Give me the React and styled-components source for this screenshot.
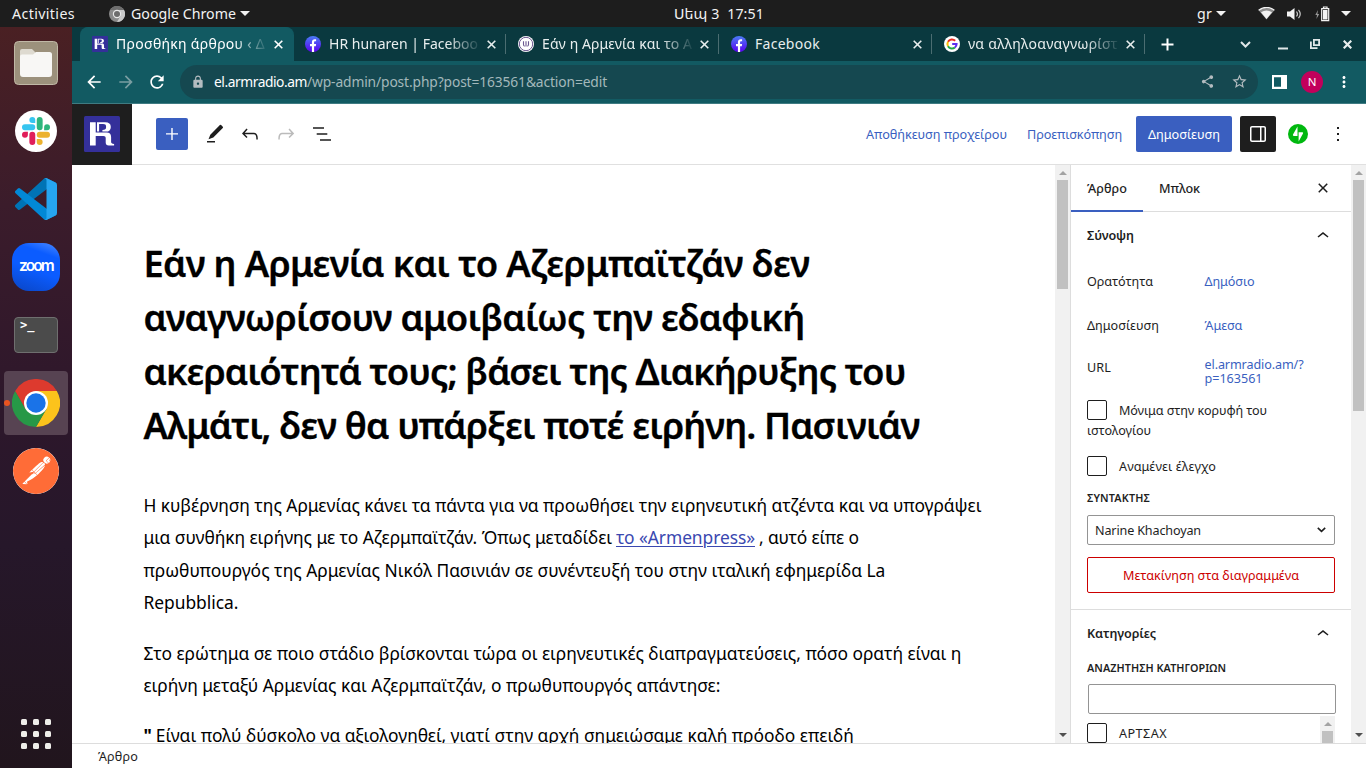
import React, { useLayoutEffect, useRef } from 'react';
import styled, { createGlobalStyle, css } from 'styled-components';
import { SiPostman } from 'react-icons/si';
import { MdArrowBack, MdArrowForward, MdRefresh, MdLock, MdShare, MdStarBorder, MdMoreVert } from 'react-icons/md';

const blue = '#3a5fc0';
const ink = '#1e1e1e';

const GlobalStyle = createGlobalStyle`
  * { box-sizing: border-box; }
  html, body { margin: 0; padding: 0; }
  body {
    width: 1366px;
    height: 768px;
    overflow: hidden;
    font-family: 'Noto Sans', 'Open Sans', 'DejaVu Sans', sans-serif;
    color: ${ink};
  }
  svg { display: block; flex: none; }
`;

/* Text run whose tracking is adjusted to reach a given width. */
const Run = styled.span`
  display: inline-block;
  white-space: pre;
  flex: none;
  justify-self: start;
  align-self: flex-start;
`;

function Fit({ w, children, ...rest }) {
  const ref = useRef(null);
  useLayoutEffect(() => {
    const el = ref.current;
    el.style.letterSpacing = '0px';
    const natural = el.getBoundingClientRect().width;
    el.style.letterSpacing = `${(w - natural) / el.textContent.length}px`;
  }, [w, children]);
  return <Run ref={ref} {...rest}>{children}</Run>;
}

const Desktop = styled.div`
  width: 1366px;
  height: 768px;
  display: flex;
  flex-direction: column;
  background: #fff;
`;

const TopBar = styled.header`
  height: 27px;
  flex: none;
  display: grid;
  grid-template-columns: 674px 1fr auto;
  align-items: center;
  background: #1d1d1d;
  color: #f2f2f2;
  font-size: 14.2px;
  line-height: 27px;
`;

const TopLeft = styled.div`
  display: flex;
  align-items: center;
  padding-left: 12px;
`;

const AppMenu = styled.div`
  display: flex;
  align-items: center;
  margin-left: 34px;
  gap: 6px;
`;

const Caret = styled.i`
  width: 0;
  height: 0;
  border: 5px solid transparent;
  border-top-color: #f2f2f2;
  border-bottom: 0;
  margin-left: ${(p) => p.$ml || 0}px;
`;

const TopRight = styled.div`
  display: flex;
  align-items: center;
  padding-right: 15px;
`;

const Body = styled.div`
  flex: 1;
  min-height: 0;
  display: flex;
`;

const Dock = styled.nav`
  width: 72px;
  flex: none;
  display: flex;
  flex-direction: column;
  align-items: center;
  gap: 4px;
  padding: 4px 0 2px;
  background: linear-gradient(#4a2023, #3b1c2b 24%, #2d172b 52%, #26172a 70%, #21151d);
`;

const DockItem = styled.div`
  position: relative;
  width: 64px;
  height: 64px;
  flex: none;
  display: grid;
  place-items: center;
  border-radius: 4px;
  background: ${(p) => (p.$active ? '#574352' : 'transparent')};
  margin-top: ${(p) => (p.$last ? 'auto' : 0)};
`;

const RunningDot = styled.b`
  position: absolute;
  left: 0;
  top: 29px;
  width: 6px;
  height: 6px;
  border-radius: 50%;
  background: #e95420;
`;

const ZoomTile = styled.div`
  width: 48px;
  height: 48px;
  border-radius: 17px;
  background: linear-gradient(20deg, #0a45c4, #0b5cff 45%, #0b5cff 75%, #4d8bff);
  color: #fff;
  font: 600 15.5px/45px 'Inter', sans-serif;
  padding-left: 7px;
`;

const TerminalTile = styled.div`
  width: 44px;
  height: 36px;
  border-radius: 4px;
  border: 1px solid #6f6f6f;
  background: #4b4b4b;
  color: #fff;
  font: 700 12px/15px 'DejaVu Sans Mono', monospace;
  padding-left: 5px;
`;

const PostmanTile = styled.div`
  width: 46px;
  height: 46px;
  margin-bottom: 1px;
  border-radius: 50%;
  overflow: hidden;
  background: #fff;
  color: #ff6c37;
`;

const DotGrid = styled.div`
  display: grid;
  grid-template-columns: repeat(3, 6px);
  gap: 6px;
`;

const GridDot = styled.i`
  height: 6px;
  border-radius: 1.5px;
  background: #efeeea;
`;

const Browser = styled.main`
  flex: 1;
  min-width: 0;
  display: flex;
  flex-direction: column;
`;

const TabStrip = styled.div`
  height: 34px;
  flex: none;
  display: flex;
  padding-left: 8px;
  background: #0a393f;
  color: #e8eeee;
  font-size: 14px;
`;

const Tab = styled.div`
  width: 213px;
  height: 34px;
  display: flex;
  align-items: center;
  padding-left: 12px;
  position: relative;
  border-radius: 8px 8px 0 0;
  ${(p) => p.$active && css`
    background: #125a62;
    color: #fff;
    box-shadow: 1px 0 #125a62;
  `}
  ${(p) => p.$divided && css`
    &::after {
      content: '';
      position: absolute;
      right: 0;
      top: 7px;
      width: 1px;
      height: 20px;
      background: #4b6d71;
    }
  `}
`;

const TabTitle = styled.div`
  width: 150px;
  height: 34px;
  line-height: 33px;
  margin: 0 8px;
  overflow: hidden;
  white-space: pre;
  ${(p) => p.$fade && css`
    mask-image: linear-gradient(to right, #000 118px, transparent 153px);
  `}
`;

const WindowButtons = styled.div`
  flex: 1;
  display: flex;
  align-items: center;
  padding-left: 16px;
`;

const Spacer = styled.div`
  width: ${(p) => p.$w}px;
  flex: none;
`;

const AddressRow = styled.div`
  height: 43px;
  flex: none;
  display: flex;
  align-items: center;
  padding: 0 12px 1px 12px;
  background: #125a62;
  border-bottom: 1px solid #3f7b82;
  color: #fff;
`;

const AddressBox = styled.div`
  width: 1078px;
  height: 34px;
  margin: 0 14px 0 13px;
  display: flex;
  align-items: center;
  padding: 0 10px 0 11px;
  border-radius: 17px;
  background: #154850;
  font-size: 13.8px;
  line-height: 34px;
`;

const UrlPath = styled.span`
  flex: 1;
  color: #a3b8bb;
`;

const Avatar = styled.div`
  width: 22px;
  height: 22px;
  border-radius: 50%;
  margin: 0 12px 0 14px;
  background: #c2005b;
  color: #fff;
  font-size: 11.5px;
  line-height: 22px;
  text-align: center;
`;

const EditorHeader = styled.div`
  height: 61px;
  flex: none;
  display: flex;
  align-items: center;
  border-bottom: 1px solid #e0e0e0;
  font-size: 12.7px;
`;

const SiteHub = styled.div`
  width: 60px;
  height: 61px;
  align-self: flex-start;
  flex: none;
  display: grid;
  place-items: start center;
  padding-top: 12px;
  background: ${ink};
  margin-right: 24px;
`;

const Inserter = styled.button`
  width: 32px;
  height: 32px;
  border: 0;
  padding: 4px;
  border-radius: 2px;
  background: ${blue};
  color: #fff;
  margin-right: 14px;
`;

const Tools = styled.div`
  display: flex;
  gap: 12px;
  flex: 1;
`;

const TextLink = styled.a`
  color: ${blue};
  margin-right: ${(p) => p.$mr || 0}px;
`;

const Publish = styled.button`
  width: 96px;
  height: 36px;
  border: 0;
  padding: 0;
  border-radius: 2px;
  background: ${blue};
  color: #fff;
  font: inherit;
`;

const Toggle = styled.button`
  width: 36px;
  height: 36px;
  border: 0;
  padding: 6px;
  margin: 0 12px 0 8px;
  border-radius: 2px;
  background: ${ink};
  color: #fff;
`;

const Work = styled.div`
  flex: 1;
  min-height: 0;
  display: flex;
`;

const Canvas = styled.article`
  width: 983px;
  flex: none;
  overflow: hidden;
  padding: 71px 0 0 71.4px;
  color: #000;
`;

const Title = styled.h1`
  margin: 0 0 37px;
  font-size: 36.4px;
  line-height: 54px;
  font-weight: 600;
  -webkit-text-stroke: 0.3px #000;
`;

const Para = styled.p`
  margin: 0 0 18px;
  font-size: 17.4px;
  line-height: 32.4px;
`;

const Line = styled.span`
  display: flex;
  white-space: pre;
`;

const InlineLink = styled.a`
  color: #3a48b0;
  margin: 0 4px;
  ${Run} {
    text-decoration: underline;
    text-decoration-thickness: 1px;
    text-underline-offset: 2px;
  }
`;

const Track = styled.div`
  width: 15px;
  flex: none;
  display: flex;
  flex-direction: column;
  align-items: center;
  background: #f1f1f1;
`;

const Arrow = styled.i`
  width: 0;
  height: 0;
  border: 4px solid transparent;
  ${(p) => (p.$down
    ? css`border-top-color: #505050; border-bottom: 0; margin: auto 0 6px;`
    : css`border-bottom-color: #a3a3a3; border-top: 0; margin: 6px 0 5px;`)}
`;

const Thumb = styled.div`
  width: 11px;
  height: ${(p) => p.$h}px;
  background: #c1c1c1;
`;

const Sidebar = styled.aside`
  width: 281px;
  flex: none;
  overflow: hidden;
  border-left: 1px solid #ddd;
  font-size: 12.6px;
  line-height: 20px;
`;

const SideTabs = styled.div`
  height: 47px;
  display: flex;
  align-items: center;
  border-bottom: 1px solid #ddd;
  font-weight: 500;
  padding-right: 16px;
`;

const SideTab = styled.div`
  width: 72px;
  height: 47px;
  line-height: 47px;
  padding-left: 16px;
  margin-right: ${(p) => (p.$active ? 0 : 'auto')};
  border-bottom: ${(p) => (p.$active ? `2px solid ${blue}` : '0')};
`;

const Section = styled.section`
  padding: 0 16px;
  height: ${(p) => p.$h || 'auto'};
  border-bottom: 1px solid #ddd;
`;

const SectionHead = styled.h2`
  display: flex;
  justify-content: space-between;
  align-items: center;
  margin: 0;
  height: ${(p) => p.$h}px;
  line-height: ${(p) => p.$h}px;
  font-size: 12.6px;
  font-weight: 600;
`;

const Field = styled.div`
  display: flex;
  align-items: center;
  height: ${(p) => p.$h}px;
`;

const FieldName = styled.div`
  width: 117.5px;
  padding-bottom: ${(p) => p.$lift || 0}px;
`;

const FieldValue = styled.div`
  color: ${blue};
  line-height: 14px;
  display: flex;
  flex-direction: column;
`;

const CheckRow = styled.div`
  display: flex;
  align-items: center;
  gap: 12px;
  height: 20px;
  line-height: 21px;
  margin-top: ${(p) => p.$mt || 0}px;
`;

const Box = styled.i`
  width: 20px;
  height: 20px;
  flex: none;
  border: 1px solid ${ink};
  border-radius: 2px;
`;

const Caption = styled.div`
  font-size: 10.8px;
  line-height: 16px;
  font-weight: 600;
  margin-top: ${(p) => p.$mt}px;
`;

const Select = styled.div`
  height: 30px;
  line-height: 29px;
  margin-top: 9px;
  display: flex;
  align-items: center;
  justify-content: space-between;
  padding: 0 8px 0 7px;
  border: 1px solid #949494;
  border-radius: 2px;
`;

const Trash = styled.button`
  display: block;
  width: 248px;
  height: 36px;
  margin-top: 12px;
  padding: 1px 0 0;
  border: 1px solid #c00;
  border-radius: 2px;
  background: #fff;
  color: #c00;
  font: inherit;
`;

const Search = styled.div`
  width: 248px;
  height: 30px;
  margin: 8px 0 0 1px;
  border: 1px solid #949494;
  border-radius: 2px;
`;

const CategoryList = styled.div`
  display: flex;
  justify-content: space-between;
  margin-top: 2px;
  height: 60px;
`;

const Footer = styled.footer`
  height: 25px;
  flex: none;
  border-top: 1px solid #ddd;
  padding-left: 26px;
  font-size: 12.6px;
  line-height: 25px;
`;

const Glyph = ({ d, size = 24, color = 'currentColor' }) => (
  <svg width={size} height={size} viewBox="0 0 24 24" fill={color}><path d={d} /></svg>
);

const icons = {
  plus: 'M11.3 12.6V18h1.4v-5.4H18v-1.3h-5.3V6h-1.4v5.3H6v1.3z',
  edit: 'M17.900 3.100a.9.9 0 0 1 1.200 0l1.700 1.700a.9.9 0 0 1 0 1.200L11.300 15.500 6.500 17.300 8.300 12.700zM5 19h8v1.600H5z',
  undo: 'M18.3 11.7c-.6-.6-1.4-.9-2.3-.9H6.7l2.9-3.3-1.1-1-4.5 5L8.5 16l1-1-2.7-2.7H16c.5 0 .9.2 1.3.5 1 1 1 3.4 1 4.5v.3h1.5v-.2c0-1.5 0-4.3-1.5-5.7z',
  redo: 'M15.6 6.5l-1.1 1 2.9 3.3H8c-.9 0-1.7.3-2.3.9-1.4 1.5-1.4 4.2-1.4 5.6v.2h1.5v-.3c0-1.1 0-3.5 1-4.5.3-.3.7-.5 1.3-.5h9.2L14.5 15l1.1 1.1 4.6-4.6-4.6-5z',
  list: 'M3 5.200h11v1.600H3zM6.700 11.200h10.600v1.600H6.700zM10 17.200h11v1.600H10z',
  drawer: 'M18 4H6c-1.1 0-2 .9-2 2v12c0 1.1.9 2 2 2h12c1.1 0 2-.9 2-2V6c0-1.1-.9-2-2-2zm-4 14.5H6c-.3 0-.5-.2-.5-.5V6c0-.3.2-.5.5-.5h8v13zm4.5-.5c0 .3-.2.5-.5.5h-2.5v-13H18c.3 0 .5.2.5.5v12z',
  close: 'M12 13.06l3.712 3.713 1.061-1.06L13.061 12l3.712-3.712-1.06-1.06L12 10.938 8.288 7.227l-1.061 1.06L10.939 12l-3.712 3.712 1.06 1.061L12 13.061z',
  up: 'M6.5 12.4L12 8l5.5 4.4-.9 1.2L12 10l-4.5 3.6-1-1.2z',
  more: 'M13 19h-2v-2h2v2zm0-6h-2v-2h2v2zm0-6h-2V5h2v2z',
};

const StationLogo = ({ size }) => (
  <svg width={size} height={size} viewBox="0 0 36 36">
    <rect width="36" height="36" rx="1.5" fill="#34309a" />
    <path fill="#fff" d="M6 6.300h5.700V16.600H22.500c3 0 4.600 1.400 4.600 4.500v4.700c0 1.400.8 1.900 3 2.100v1.500h-5.300c-2.100 0-3.100-.8-3.100-2.800v-4.300c0-1.700-.7-2.400-2.300-2.400h-7.700v9.500H6z" />
    <path fill="#fff" d="M13 6.300h8.200c3.700 0 5.600 1.500 5.600 4.600s-1.800 4.700-4.800 4.700h-3.600v-1.700c2.700 0 3.700-.8 3.700-3s-1-2.800-3-2.800h-4v7.500H13z" />
  </svg>
);

const FacebookMark = () => (
  <svg width="16" height="16" viewBox="0 0 16 16">
    <defs><linearGradient id="fb" x1="0" y1="0" x2="0" y2="1"><stop stopColor="#4a7cf6" /><stop offset="1" stopColor="#5a00f0" /></linearGradient></defs>
    <circle cx="8" cy="8" r="8" fill="url(#fb)" />
    <path fill="#fff" d="M6.900 16V10.200H5V7.900h1.900V6.300c0-2 1.100-3.100 2.900-3.100.6 0 1.300.1 1.300.1v2h-.9c-.9 0-1.100.5-1.100 1.100v1.500h2l-.3 2.300H9.100V16z" />
  </svg>
);

const PressMark = () => (
  <svg width="16" height="16" viewBox="0 0 16 16">
    <circle cx="8" cy="8" r="8" fill="#fff" />
    <circle cx="8" cy="8" r="6.700" fill="none" stroke="#6b5790" strokeWidth="1" />
    <path d="M5.500 5.200v3.300q0 1.600 1.200 1.600M8 5.200v5.300M10.500 5.200v3.300q0 1.600-1.200 1.600" stroke="#6b5790" strokeWidth="1.100" fill="none" />
  </svg>
);

const GoogleMark = () => (
  <svg width="16" height="16" viewBox="0 0 16 16" fill="none" strokeWidth="2">
    <circle cx="8" cy="8" r="8" fill="#fff" />
    <path d="M11.200 4.700A4.600 4.600 0 0 0 4 5.800" stroke="#ea2b1f" />
    <path d="M4 5.800a4.600 4.600 0 0 0 0 4.400" stroke="#fbbc05" />
    <path d="M4 10.200a4.600 4.600 0 0 0 6.900 1.300" stroke="#1faa46" />
    <path d="M10.900 11.500A4.600 4.600 0 0 0 12.600 8H8.200" stroke="#5a2ff0" />
  </svg>
);

const Cross = ({ size = 9, width = 1.6 }) => (
  <svg width={size} height={size} viewBox="0 0 9 9" stroke="currentColor" strokeWidth={width}><path d="M.7.7l7.600 7.600M8.300.7L.7 8.300" /></svg>
);

const ChromeMark = () => (
  <svg width="48" height="48" viewBox="0 0 48 48">
    <path d="M24 24 3.200 12A24 24 0 0 1 44.800 12z" fill="#dd3a2e" />
    <path d="M24 12h20.800A24 24 0 0 1 24 48L34.400 30z" fill="#fcc31c" />
    <path d="M34.400 30 24 48A24 24 0 0 1 3.200 12L13.600 30z" fill="#279847" />
    <path d="M3.200 12 13.600 30 24 24V12z" fill="#dd3a2e" />
    <circle cx="24" cy="24" r="12" fill="#fff" />
    <circle cx="24" cy="24" r="9.700" fill="#1a73e8" />
  </svg>
);

const GreyChrome = () => (
  <svg width="16" height="16" viewBox="0 0 16 16">
    <circle cx="8" cy="8" r="8" fill="#8a8a8a" />
    <path d="M8 4h7A8 8 0 0 1 8 16l3.500-6z" fill="#c9c9c9" />
    <path d="M1.100 4A8 8 0 0 1 15 4H8z" fill="#6e6e6e" />
    <circle cx="8" cy="8" r="4.200" fill="#e8e8e8" />
    <circle cx="8" cy="8" r="3" fill="#6c6c6c" />
  </svg>
);

const FilesMark = () => (
  <svg width="44" height="44" viewBox="0 0 44 44">
    <rect x=".5" y=".5" width="43" height="43" rx="4" fill="#9c917c" stroke="#c0b8a6" />
    <path d="M6 10a2 2 0 0 1 2-2h10l4 4h12a3 3 0 0 1 3 3v6H6z" fill="#dedad0" />
    <path d="M6 15.500A2 2 0 0 1 8 13.500h11l3-2.500h13.500a2.500 2.500 0 0 1 2.500 2.500V33a3 3 0 0 1-3 3H9a3 3 0 0 1-3-3z" fill="#f8f7f5" />
  </svg>
);

const slackColors = ['#e01e5a', '#36c5f0', '#2eb67d', '#ecb22e'];
const SlackMark = () => (
  <svg width="42" height="42" viewBox="0 0 42 42">
    <circle cx="21" cy="21" r="21" fill="#fff" />
    <g transform="translate(7 7) scale(1.167)">
      {slackColors.map((c, i) => (
        <path key={c} fill={c} transform={`rotate(${i * 90} 12 12)`} d="M5.042 15.165a2.521 2.521 0 1 1-2.520-2.520h2.520zM6.313 15.165a2.521 2.521 0 0 1 5.042 0v6.313a2.521 2.521 0 0 1-5.042 0z" />
      ))}
    </g>
  </svg>
);

const CodeMark = () => (
  <svg width="42" height="42" viewBox="0 0 100 100">
    <path fill="#0073b5" d="M96.461 10.796 75.857.876A6.230 6.230 0 0 0 68.750 2.083L1.299 63.583a4.170 4.170 0 0 0 .004 6.162l5.510 5.009a4.170 4.170 0 0 0 5.321.236L93.361 13.370c2.725-2.067 6.639-.124 6.639 3.297v-.24a6.250 6.250 0 0 0-3.539-5.631z" />
    <path fill="#0288d6" d="M96.461 89.204 75.857 99.125a6.230 6.230 0 0 1-7.107-1.208L1.299 36.417a4.170 4.170 0 0 1 .004-6.162l5.510-5.009a4.170 4.170 0 0 1 5.321-.236L93.361 86.630c2.725 2.067 6.639.124 6.639-3.297v.24a6.250 6.250 0 0 1-3.539 5.631z" />
    <path fill="#26a5f0" d="M75.858 99.126a6.230 6.230 0 0 1-7.108-1.209c2.306 2.306 6.250.672 6.250-2.589V4.672c0-3.262-3.944-4.895-6.250-2.589A6.230 6.230 0 0 1 75.858.874l20.600 9.907A6.250 6.250 0 0 1 100 16.413v67.174a6.250 6.250 0 0 1-3.541 5.633z" />
  </svg>
);

const tabs = [
  { icon: <StationLogo size={16} />, text: 'Προσθήκη άρθρου ‹ Δ', w: 149, active: true },
  { icon: <FacebookMark />, text: 'HR hunaren | Faceboo', w: 149, divided: true },
  { icon: <PressMark />, text: 'Εάν η Αρμενία και το Α', w: 150, divided: true },
  { icon: <FacebookMark />, text: 'Facebook', w: 65, divided: true, whole: true },
  { icon: <GoogleMark />, text: 'να αλληλοαναγνωρίστ', w: 150, divided: true },
];

const titleLines = [
  ['Εάν η Αρμενία και το Αζερμπαϊτζάν δεν', 666],
  ['αναγνωρίσουν αμοιβαίως την εδαφική', 661],
  ['ακεραιότητά τους; βάσει της Διακήρυξης του', 762],
  ['Αλμάτι, δεν θα υπάρξει ποτέ ειρήνη. Πασινιάν', 776],
];

function Scrollbar({ thumb }) {
  return <Track><Arrow /><Thumb $h={thumb} /><Arrow $down /></Track>;
}

function SystemBar() {
  return (
    <TopBar>
      <TopLeft>
        <Fit w={63}>Activities</Fit>
        <AppMenu><GreyChrome /><Fit w={105}>Google Chrome</Fit><Caret $ml={-2} /></AppMenu>
      </TopLeft>
      <Fit w={90}>Սեպ 3  17:51</Fit>
      <TopRight>
        <Fit w={15}>gr</Fit><Caret $ml={4} />
        <Spacer $w={32} />
        <svg width="17" height="13" viewBox="0 0 17 13"><path d="M.6 3.200Q8.500-2.400 16.400 3.200L8.500 12.600z" fill="#8d8d8d" /><path d="M.6 3.200Q8.500-2.400 16.400 3.200" stroke="#f2f2f2" fill="none" strokeWidth="1.300" /><path d="M3 5.200Q8.500 1.600 14 5.200L8.500 12z" fill="#f2f2f2" /></svg>
        <Spacer $w={12} />
        <svg width="16" height="14" viewBox="0 0 16 14"><path d="M0 4.500h3L7.500 1v12L3 9.500H0z" fill="#f2f2f2" /><path d="M9.500 4.500q2 2.500 0 5M11.500 2.800q3.500 4.200 0 8.400" stroke="#c8c8c8" fill="none" strokeWidth="1.200" /></svg>
        <Spacer $w={12} />
        <svg width="15" height="16" viewBox="0 0 15 16"><path d="M3 4 .3 9H2l-.6 4L4.200 8H2.400z" fill="#999" /><path d="M6.700 2.700h7v12h-7zM8.500 1h3.500v1.500H8.500z" fill="none" stroke="#f2f2f2" strokeWidth="1.200" /><path d="M8 4h4.500v9.500H8z" fill="#f2f2f2" /></svg>
        <Caret $ml={11} />
      </TopRight>
    </TopBar>
  );
}

function Launcher() {
  return (
    <Dock>
      <DockItem><FilesMark /></DockItem>
      <DockItem><SlackMark /></DockItem>
      <DockItem><CodeMark /></DockItem>
      <DockItem><ZoomTile><Fit w={34}>zoom</Fit></ZoomTile></DockItem>
      <DockItem><TerminalTile>&gt;_</TerminalTile></DockItem>
      <DockItem $active><RunningDot /><ChromeMark /></DockItem>
      <DockItem><PostmanTile><SiPostman size={46} /></PostmanTile></DockItem>
      <DockItem $last>
        <DotGrid>{Array.from({ length: 9 }, (_, i) => <GridDot key={i} />)}</DotGrid>
      </DockItem>
    </Dock>
  );
}

function BrowserChrome() {
  return (
    <>
      <TabStrip>
        {tabs.map((t, i) => (
          <Tab key={i} $active={t.active} $divided={t.divided}>
            {t.icon}
            <TabTitle $fade={!t.whole}><Fit w={t.w}>{t.text}</Fit></TabTitle>
            <Cross />
          </Tab>
        ))}
        <WindowButtons>
          <svg width="13" height="13" viewBox="0 0 13 13" stroke="#fff" strokeWidth="2"><path d="M6.500.5v12M.5 6.500h12" /></svg>
          <Spacer $w={66} />
          <svg width="11" height="7" viewBox="0 0 11 7" stroke="#dfe7e8" strokeWidth="2" fill="none"><path d="M1 1l4.500 4.500L10 1" /></svg>
          <Spacer $w={27} />
          <svg width="10" height="11" viewBox="0 0 10 11"><path d="M0 8.500h10v2H0z" fill="#dfe7e8" /></svg>
          <Spacer $w={22} />
          <svg width="10" height="10" viewBox="0 0 10 10" stroke="#dfe7e8" strokeWidth="1.800" fill="none"><path d="M3.900.9h5.200v5.200H3.900zM.9 2.500v6.600h6.600" /></svg>
          <Spacer $w={23} />
          <Cross size={9} width={2.2} />
        </WindowButtons>
      </TabStrip>
      <AddressRow>
        <MdArrowBack size={20} />
        <Spacer $w={12} />
        <MdArrowForward size={20} color="#7a9ea2" />
        <Spacer $w={11} />
        <MdRefresh size={20} />
        <AddressBox>
          <MdLock size={14} color="#b4bcc0" />
          <Spacer $w={9} />
          <Fit w={93}>el.armradio.am</Fit>
          <UrlPath><Fit w={300}>/wp-admin/post.php?post=163561&amp;action=edit</Fit></UrlPath>
          <MdShare size={15} color="#b4bcc0" />
          <Spacer $w={16} />
          <MdStarBorder size={17} color="#b4bcc0" />
        </AddressBox>
        <svg width="15" height="14" viewBox="0 0 15 14"><path fill="#fff" fillRule="evenodd" d="M0 0h15v14H0zM2 2.200v9.600h7V2.200z" /></svg>
        <Avatar>N</Avatar>
        <MdMoreVert size={18} />
      </AddressRow>
    </>
  );
}

function EditorBar() {
  return (
    <EditorHeader>
      <SiteHub><StationLogo size={36} /></SiteHub>
      <Inserter><Glyph d={icons.plus} /></Inserter>
      <Tools>
        <Glyph d={icons.edit} />
        <Glyph d={icons.undo} />
        <Glyph d={icons.redo} color="#bbb" />
        <Glyph d={icons.list} />
      </Tools>
      <TextLink $mr={20}><Fit w={141}>Αποθήκευση προχείρου</Fit></TextLink>
      <TextLink $mr={14}><Fit w={95}>Προεπισκόπηση</Fit></TextLink>
      <Publish><Fit w={72}>Δημοσίευση</Fit></Publish>
      <Toggle><Glyph d={icons.drawer} /></Toggle>
      <svg width="20" height="20" viewBox="0 0 32 32"><circle cx="16" cy="16" r="16" fill="#00b80f" /><path d="M15.200 19H9.500Q7 19 8 16.800L15.200 4zM17 28V13h5.500Q25 13 24 15.200z" fill="#fff" /></svg>
      <Spacer $w={18} />
      <Glyph d={icons.more} />
      <Spacer $w={16} />
    </EditorHeader>
  );
}

function Post() {
  return (
    <Canvas>
      <Title>{titleLines.map(([text, w]) => <Line key={text}><Fit w={w}>{text}</Fit></Line>)}</Title>
      <Para>
        <Line><Fit w={838}>Η κυβέρνηση της Αρμενίας κάνει τα πάντα για να προωθήσει την ειρηνευτική ατζέντα και να υπογράψει</Fit></Line>
        <Line>
          <Fit w={468.6}>μια συνθήκη ειρήνης με το Αζερμπαϊτζάν. Όπως μεταδίδει</Fit>
          <InlineLink><Fit w={139}>το «Armenpress»</Fit></InlineLink>
          <Fit w={100}>, αυτό είπε ο</Fit>
        </Line>
        <Line><Fit w={742}>πρωθυπουργός της Αρμενίας Νικόλ Πασινιάν σε συνέντευξή του στην ιταλική εφημερίδα La</Fit></Line>
        <Line><Fit w={95}>Repubblica.</Fit></Line>
      </Para>
      <Para>
        <Line><Fit w={818}>Στο ερώτημα σε ποιο στάδιο βρίσκονται τώρα οι ειρηνευτικές διαπραγματεύσεις, πόσο ορατή είναι η</Fit></Line>
        <Line><Fit w={577}>ειρήνη μεταξύ Αρμενίας και Αζερμπαϊτζάν, ο πρωθυπουργός απάντησε:</Fit></Line>
      </Para>
      <Para>
        <Line><b>"</b><Spacer $w={4} /><Fit w={698}>Είναι πολύ δύσκολο να αξιολογηθεί, γιατί στην αρχή σημειώσαμε καλή πρόοδο επειδή</Fit></Line>
      </Para>
    </Canvas>
  );
}

function Settings() {
  return (
    <Sidebar>
      <SideTabs>
        <SideTab $active><Fit w={40}>Άρθρο</Fit></SideTab>
        <SideTab><Fit w={41}>Μπλοκ</Fit></SideTab>
        <Glyph d={icons.close} />
      </SideTabs>
      <Section $h="398px">
        <SectionHead $h={48}><Fit w={47}>Σύνοψη</Fit><Glyph d={icons.up} /></SectionHead>
        <Field $h={44}><FieldName><Fit w={66}>Ορατότητα</Fit></FieldName><FieldValue><Fit w={50}>Δημόσιο</Fit></FieldValue></Field>
        <Field $h={44}><FieldName><Fit w={72}>Δημοσίευση</Fit></FieldName><FieldValue><Fit w={38}>Άμεσα</Fit></FieldValue></Field>
        <Field $h={48}>
          <FieldName $lift={9}><Fit w={24}>URL</Fit></FieldName>
          <FieldValue><Fit w={99}>el.armradio.am/?</Fit><Fit w={58}>p=163561</Fit></FieldValue>
        </Field>
        <CheckRow $mt={4}><Box /><Fit w={148}>Μόνιμα στην κορυφή του</Fit></CheckRow>
        <CheckRow><Fit w={64}>ιστολογίου</Fit></CheckRow>
        <CheckRow $mt={16}><Box /><Fit w={97}>Αναμένει έλεγχο</Fit></CheckRow>
        <Caption $mt={14}><Fit w={63}>ΣΥΝΤΑΚΤΗΣ</Fit></Caption>
        <Select>
          <Fit w={106}>Narine Khachoyan</Fit>
          <svg width="9" height="6" viewBox="0 0 9 6" fill="none" stroke={ink} strokeWidth="1.600"><path d="M.8.8l3.700 3.500L8.200.8" /></svg>
        </Select>
        <Trash><Fit w={176}>Μετακίνηση στα διαγραμμένα</Fit></Trash>
      </Section>
      <Section>
        <SectionHead $h={48}><Fit w={69}>Κατηγορίες</Fit><Glyph d={icons.up} /></SectionHead>
        <Caption $mt={2}><Fit w={139}>ΑΝΑΖΗΤΗΣΗ ΚΑΤΗΓΟΡΙΩΝ</Fit></Caption>
        <Search />
        <CategoryList>
          <CheckRow $mt={7}><Box /><Fit w={48}>ΑΡΤΣΑΧ</Fit></CheckRow>
          <Scrollbar thumb={40} />
        </CategoryList>
      </Section>
    </Sidebar>
  );
}

export default function App() {
  return (
    <Desktop>
      <GlobalStyle />
      <SystemBar />
      <Body>
        <Launcher />
        <Browser>
          <BrowserChrome />
          <EditorBar />
          <Work>
            <Post />
            <Scrollbar thumb={109} />
            <Settings />
            <Scrollbar thumb={231} />
          </Work>
          <Footer><Fit w={40}>Άρθρο</Fit></Footer>
        </Browser>
      </Body>
    </Desktop>
  );
}
